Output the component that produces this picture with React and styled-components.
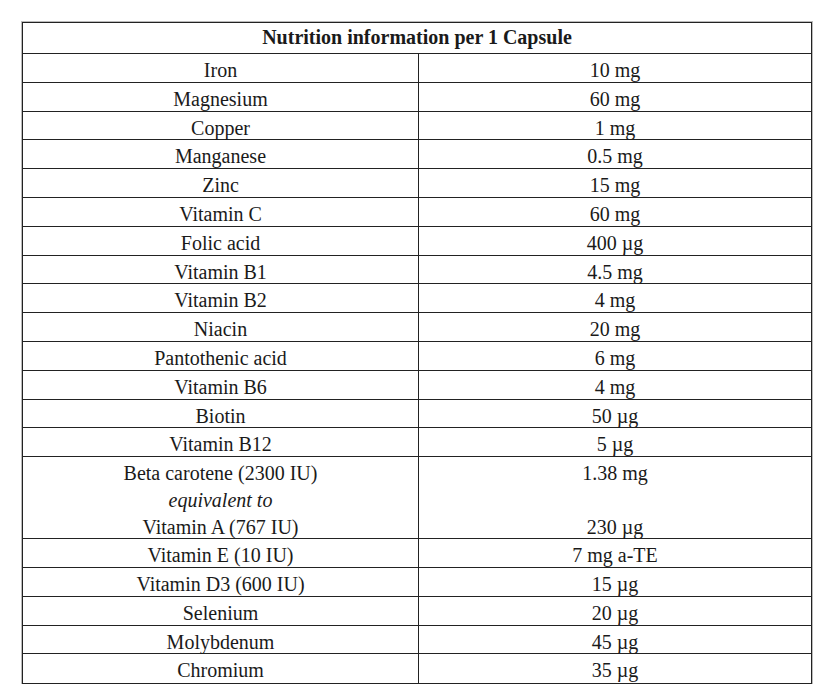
import React from "react";
import styled, { createGlobalStyle } from "styled-components";

const GlobalStyle = createGlobalStyle`
  body {
    margin: 0;
    background: #fff;
    font-family: "Liberation Serif", "Times New Roman", serif;
    color: #1a1a1a;
  }
`;

const Page = styled.div`
  padding: 22px 0 0 22px;
`;

const Table = styled.div`
  width: 790px;
  box-sizing: border-box;
  border: 1px solid #222;
  box-shadow: 0 0 0 1px rgba(60, 60, 60, 0.35);
`;

const Header = styled.div`
  height: 31px;
  box-sizing: border-box;
  border-bottom: 1px solid #222;
  text-align: center;
  font-weight: bold;
  font-size: 20px;
  line-height: 29px;
`;

const Row = styled.div`
  display: grid;
  grid-template-columns: 395px 1fr;
  height: ${(p) => p.$height}px;
  box-sizing: border-box;
  border-bottom: ${(p) => (p.$last ? "none" : "1px solid #222")};
`;

const Cell = styled.div`
  text-align: center;
  font-size: 20px;
  line-height: 28px;
  padding-top: 2px;
  border-left: ${(p) => (p.$divider ? "1px solid #222" : "none")};
`;

const Line = styled.div`
  height: 27px;
  font-style: ${(p) => (p.$italic ? "italic" : "normal")};
`;

const rows = [
  ["Iron", "10 mg"],
  ["Magnesium", "60 mg"],
  ["Copper", "1 mg"],
  ["Manganese", "0.5 mg"],
  ["Zinc", "15 mg"],
  ["Vitamin C", "60 mg"],
  ["Folic acid", "400 µg"],
  ["Vitamin B1", "4.5 mg"],
  ["Vitamin B2", "4 mg"],
  ["Niacin", "20 mg"],
  ["Pantothenic acid", "6 mg"],
  ["Vitamin B6", "4 mg"],
  ["Biotin", "50 µg"],
  ["Vitamin B12", "5 µg"],
];

const rowsAfter = [
  ["Vitamin E (10 IU)", "7 mg a-TE"],
  ["Vitamin D3 (600 IU)", "15 µg"],
  ["Selenium", "20 µg"],
  ["Molybdenum", "45 µg"],
  ["Chromium", "35 µg"],
];

const App = () => {
  return (
    <Page>
      <GlobalStyle />
      <Table>
        <Header>Nutrition information per 1 Capsule</Header>
        {rows.map(([name, amount]) => (
          <Row key={name} $height={28.8}>
            <Cell>{name}</Cell>
            <Cell $divider>{amount}</Cell>
          </Row>
        ))}
        <Row $height={82}>
          <Cell>
            <Line>Beta carotene (2300 IU)</Line>
            <Line $italic>equivalent to</Line>
            <Line>Vitamin A (767 IU)</Line>
          </Cell>
          <Cell $divider>
            <Line>1.38 mg</Line>
            <Line />
            <Line>230 µg</Line>
          </Cell>
        </Row>
        {rowsAfter.map(([name, amount], i) => (
          <Row key={name} $height={28.8} $last={i === rowsAfter.length - 1}>
            <Cell>{name}</Cell>
            <Cell $divider>{amount}</Cell>
          </Row>
        ))}
      </Table>
    </Page>
  );
};

export default App;
